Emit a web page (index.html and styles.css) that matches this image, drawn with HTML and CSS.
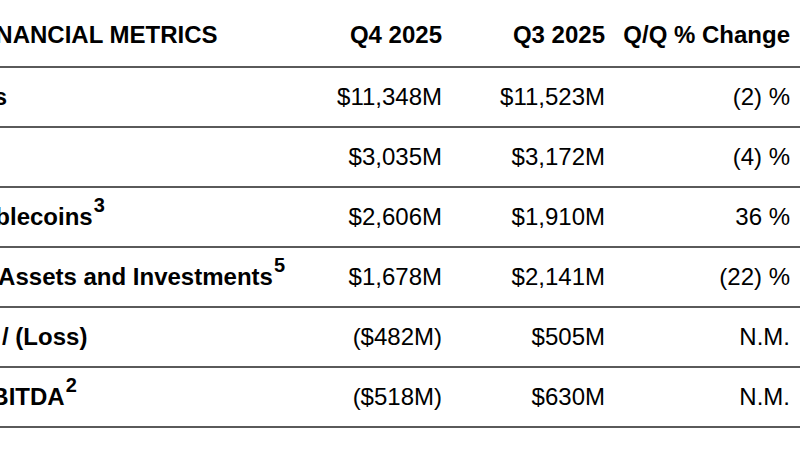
FILE: index.html
```html
<!DOCTYPE html>
<html lang="en">
<head>
<meta charset="utf-8">
<title>Financial Metrics</title>
<link rel="stylesheet" href="styles.css">
</head>
<body>
<div class="viewport">
  <div class="metrics">
    <div class="row row--head">
      <div class="label indent-head">FINANCIAL METRICS</div>
      <div class="num">Q4 2025</div>
      <div class="num">Q3 2025</div>
      <div class="num">Q/Q % Change</div>
    </div>
    <div class="row">
      <div class="label indent-1">USD Resources</div>
      <div class="num">$11,348M</div>
      <div class="num">$11,523M</div>
      <div class="num">(2) %</div>
    </div>
    <div class="row">
      <div class="label indent-2">Total Revenue</div>
      <div class="num">$3,035M</div>
      <div class="num">$3,172M</div>
      <div class="num">(4) %</div>
    </div>
    <div class="row">
      <div class="label indent-3">Stablecoins<sup class="note">3</sup></div>
      <div class="num">$2,606M</div>
      <div class="num">$1,910M</div>
      <div class="num">36 %</div>
    </div>
    <div class="row">
      <div class="label indent-4">Crypto Assets and Investments<sup class="note">5</sup></div>
      <div class="num">$1,678M</div>
      <div class="num">$2,141M</div>
      <div class="num">(22) %</div>
    </div>
    <div class="row">
      <div class="label indent-5">Net Income / (Loss)</div>
      <div class="num">($482M)</div>
      <div class="num">$505M</div>
      <div class="num">N.M.</div>
    </div>
    <div class="row">
      <div class="label indent-6">Adjusted EBITDA<sup class="note">2</sup></div>
      <div class="num">($518M)</div>
      <div class="num">$630M</div>
      <div class="num">N.M.</div>
    </div>
  </div>
</div>
</body>
</html>
```

FILE: styles.css
```css
html, body {
  margin: 0;
  padding: 0;
  background: #ffffff;
}

.viewport {
  width: 800px;
  height: 450px;
  overflow: hidden;
}

.metrics {
  margin-left: -175px;
  width: 975px;
  font-family: "Liberation Sans", Arial, sans-serif;
  font-size: 24px;
  color: #000000;
}

.row {
  display: grid;
  grid-template-columns: 475px 142px 163px 185px;
  padding-right: 10px;
  height: 60px;
  box-sizing: border-box;
  align-items: center;
  border-bottom: 2px solid #5a5a5a;
  line-height: 28px;
}

.row--head {
  height: 68px;
  padding-top: 4px;
  font-weight: 700;
}

.label {
  font-weight: 700;
  white-space: nowrap;
}

.num {
  text-align: right;
  white-space: nowrap;
}

.note {
  font-size: 20px;
  line-height: 0;
  vertical-align: 13px;
  font-weight: 700;
  margin-left: 1px;
}

.indent-head { padding-left: 149px; }
.indent-1 { padding-left: 2px; }
.indent-2 { padding-left: 0; }
.indent-3 { padding-left: 133px; }
.indent-4 { padding-left: 90px; }
.indent-5 { padding-left: 41px; }
.indent-6 { padding-left: 41px; }
```
